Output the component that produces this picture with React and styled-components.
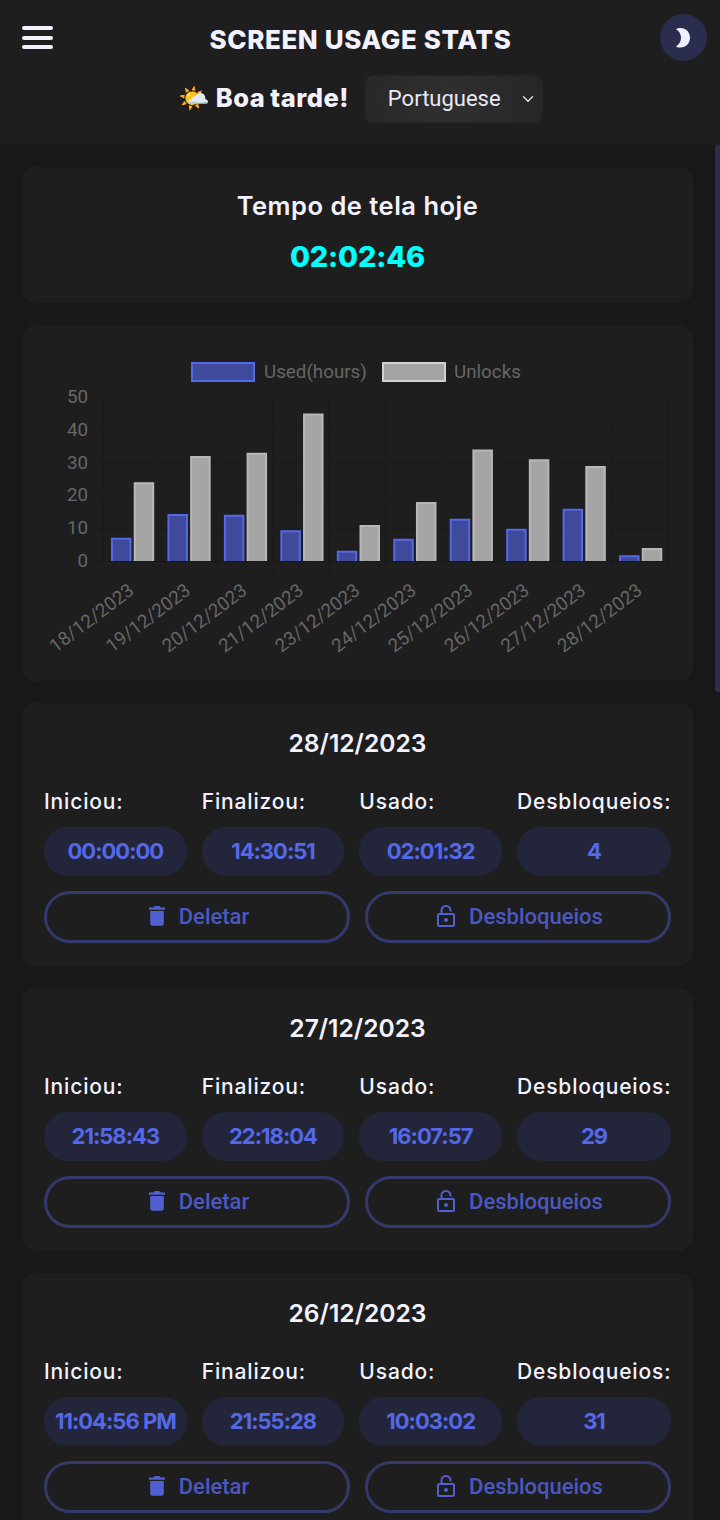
import React from "react";
import styled, { createGlobalStyle } from "styled-components";
import { ChevronDown } from "lucide-react";

const Global = createGlobalStyle`
  html, body { margin: 0; padding: 0; height: 100%; background: #181818; }
  #root { height: 1520px; }
  * { box-sizing: border-box; }
`;

const display = `"Inter", "Noto Sans", sans-serif`;
const ui = `"Roboto", "Noto Sans", sans-serif`;

const Page = styled.div`
  position: relative;
  width: 720px;
  height: 1520px;
  display: flex;
  flex-direction: column;
  overflow: hidden;
  background: #181818;
`;

const Header = styled.header`
  height: 145px;
  flex: none;
  background: #1e1e1e;
  padding: 14px 13px 0 22px;
  display: flex;
  flex-direction: column;
`;

const TopRow = styled.div`
  display: flex;
  align-items: center;
  justify-content: space-between;
  height: 47px;
`;

const Burger = styled.button`
  width: 31px;
  height: 23px;
  padding: 0;
  border: 0;
  background: none;
  display: flex;
  flex-direction: column;
  justify-content: space-between;
`;

const BurgerBar = styled.span`
  display: block;
  height: 4px;
  border-radius: 2px;
  background: #f3f2ff;
`;

const Title = styled.h1`
  margin: 0 0 0 8px;
  padding-top: 3px;
  font: 800 26px ${display};
  letter-spacing: 0.6px;
  color: #f3f2ff;
`;

const ThemeButton = styled.button`
  width: 47px;
  height: 47px;
  padding: 0;
  border: 0;
  border-radius: 50%;
  background: #2a2d4d;
  display: flex;
  align-items: center;
  justify-content: center;
`;

const GreetingRow = styled.div`
  display: flex;
  align-items: center;
  justify-content: center;
  gap: 16px;
  margin-top: 14px;
  padding-right: 8px;
`;

const Greeting = styled.span`
  display: flex;
  align-items: center;
  padding-bottom: 3px;
  font: 800 25.5px ${display};
  letter-spacing: 0.5px;
  word-spacing: -1px;
  color: #f3f2ff;
  white-space: pre;
`;

const SelectWrap = styled.div`
  position: relative;
  width: 178px;
  height: 48px;
  color: #e9e8f8;
  svg {
    position: absolute;
    right: 6px;
    top: 15px;
    pointer-events: none;
  }
`;

const LangSelect = styled.select`
  appearance: none;
  width: 100%;
  height: 100%;
  padding: 0 12px 2px 22px;
  border: 1px solid #252525;
  border-radius: 8px;
  background: radial-gradient(circle at 45% 50%, #303030, #262626);
  color: inherit;
  font: 400 22px ${ui};
  outline: none;
`;

const Main = styled.main`
  flex: 1;
  min-height: 0;
  overflow-y: auto;
  scrollbar-width: none;
  padding: 22px;
  display: flex;
  flex-direction: column;
  gap: 22px;
`;

const ScrollThumb = styled.div`
  position: absolute;
  top: 145px;
  right: 0;
  width: 5px;
  height: 547px;
  border-radius: 3px 0 0 3px;
  background: #2a2d4d;
`;

const Card = styled.section`
  flex: none;
  width: 671px;
  background: #1e1e1e;
  border-radius: 14px;
  padding: ${(p) => p.$padding || "22px 22px 23px"};
`;

const CardTitle = styled.h2`
  margin: 0;
  text-align: center;
  font: 600 ${(p) => p.$size}px/36px ${display};
  letter-spacing: ${(p) => p.$spacing || 0}px;
  color: #f3f2ff;
`;

const Clock = styled.div`
  margin-top: 11px;
  text-align: center;
  font: 800 29px/44px ${display};
  letter-spacing: -0.2px;
  color: #00ffff;
`;

const Chart = styled.svg`
  display: block;
  width: 671px;
  height: 356px;
`;

const Stats = styled.div`
  display: grid;
  grid-template-columns: repeat(3, 1fr) 154px;
  column-gap: 15px;
  margin-top: 26px;
`;

const StatLabel = styled.div`
  font: 500 21px/30px ${display};
  color: #f3f2ff;
  white-space: nowrap;
  letter-spacing: 0.85px;
`;

const StatValue = styled.div`
  margin-top: 10px;
  height: 49px;
  padding-bottom: 2px;
  border-radius: 24px;
  background: #23263a;
  color: #5468e8;
  display: flex;
  align-items: center;
  justify-content: center;
  font: 700 22px ${display};
  letter-spacing: -1px;
  white-space: nowrap;
`;

const Actions = styled.div`
  display: grid;
  grid-template-columns: 1fr 1fr;
  column-gap: 15px;
  margin-top: 15px;
`;

const ActionButton = styled.button`
  height: 52px;
  border: 3px solid #33396b;
  border-radius: 26px;
  background: none;
  color: #4a58c0;
  display: flex;
  align-items: center;
  justify-content: center;
  gap: 14px;
  font: 500 22px ${ui};
  padding: 0 0 2px 4px;
`;

const dayData = [
  { date: "28/12/2023", start: "00:00:00", end: "14:30:51", used: "02:01:32", unlocks: "4" },
  { date: "27/12/2023", start: "21:58:43", end: "22:18:04", used: "16:07:57", unlocks: "29" },
  { date: "26/12/2023", start: "11:04:56 PM", end: "21:55:28", used: "10:03:02", unlocks: "31" },
  { date: "25/12/2023", start: "22:12:10", end: "23:40:31", used: "13:02:44", unlocks: "34" },
  { date: "24/12/2023", start: "21:03:27", end: "22:58:12", used: "06:54:19", unlocks: "18" },
  { date: "23/12/2023", start: "20:45:09", end: "21:31:50", used: "03:09:41", unlocks: "11" },
  { date: "21/12/2023", start: "22:30:18", end: "23:15:02", used: "09:27:33", unlocks: "45" },
  { date: "20/12/2023", start: "21:11:36", end: "22:49:25", used: "14:08:16", unlocks: "33" },
  { date: "19/12/2023", start: "22:05:51", end: "23:22:47", used: "14:20:05", unlocks: "32" },
  { date: "18/12/2023", start: "20:37:14", end: "21:59:08", used: "07:06:28", unlocks: "24" },
];

const chartData = [
  ["18/12/2023", 7.1, 24],
  ["19/12/2023", 14.3, 32],
  ["20/12/2023", 14.1, 33],
  ["21/12/2023", 9.4, 45],
  ["23/12/2023", 3.1, 11],
  ["24/12/2023", 6.8, 18],
  ["25/12/2023", 12.9, 34],
  ["26/12/2023", 9.8, 31],
  ["27/12/2023", 15.9, 29],
  ["28/12/2023", 1.75, 4],
];

const BLUE = { fill: "#3f4a9a", stroke: "#5468e8" };
const GRAY = { fill: "#a5a5a5", stroke: "#b8b8b8" };

function UsageChart() {
  // svg origin is the card's top-left (22, 325)
  const x0 = 81.3;
  const step = 56.45;
  const base = 236;
  const unit = 3.28;
  const count = chartData.length;
  const right = x0 + step * count;
  const labelStyle = { font: "400 18.8px Roboto, sans-serif", fill: "#666" };
  const bar = (x, value, c) => (
    <path
      d={`M${x + 1} ${base}V${base - value * unit + 1}H${x + 19.5}V${base}`}
      fill={c.fill}
      stroke={c.stroke}
      strokeWidth="2"
    />
  );
  return (
    <Chart viewBox="0 0 671 356">
      <rect x="169" y="37" width="64" height="20" fill={BLUE.fill} />
      <rect x="170" y="38" width="62" height="18" fill="none" stroke={BLUE.stroke} strokeWidth="2" />
      <text x="242" y="53" style={labelStyle}>Used(hours)</text>
      <rect x="360" y="37" width="64" height="20" fill={GRAY.fill} />
      <rect x="361" y="38" width="62" height="18" fill="none" stroke="#d0d0d0" strokeWidth="2" />
      <text x="432" y="53" style={labelStyle}>Unlocks</text>

      {[0, 10, 20, 30, 40, 50].map((v) => {
        const y = base - v * unit;
        return (
          <g key={v}>
            <line x1={x0 - 10} x2={right} y1={y + 0.5} y2={y + 0.5} stroke={v === 0 ? "#171717" : "#1b1b1b"} strokeWidth="1" />
            <text x="66" y={y + 6} textAnchor="end" style={labelStyle}>{v}</text>
          </g>
        );
      })}
      {Array.from({ length: count + 1 }, (_, i) => (
        <line key={i} x1={x0 + i * step} x2={x0 + i * step} y1={base - 50 * unit} y2={base + 13} stroke="#1b1b1b" strokeWidth="1" />
      ))}
      {chartData.map(([label, used, unlocks], i) => {
        const x = x0 + i * step;
        return (
          <g key={label}>
            {bar(x + 7.7, used, BLUE)}
            {bar(x + 30.4, unlocks, GRAY)}
            <text
              transform={`translate(${x + 32} ${base + 32}) rotate(-37)`}
              textAnchor="end"
              style={labelStyle}
            >
              {label}
            </text>
          </g>
        );
      })}
    </Chart>
  );
}

const MoonIcon = () => (
  <svg width="16" height="20" viewBox="0 0 16 20">
    <path d="M1 1.2C2.2.4 3.8 0 5.500 0 11 0 15 4.400 15 9.800S11 19.600 5.500 19.600C3.800 19.600 2.200 19.200 1 18.400 4 16.600 6 13.500 6 9.800S4 2.900 1 1.200Z" fill="#f0efff" />
  </svg>
);

const TrashIcon = () => (
  <svg width="16" height="20" viewBox="0 0 16 20">
    <path d="M5.500 0h5l1 1.500H16v2.200H0V1.500h4.500z M1.200 5h13.600v12.500a2.300 2.300 0 0 1-2.300 2.300h-9a2.300 2.300 0 0 1-2.300-2.300z" fill="#5060d0" />
  </svg>
);

const LockIcon = () => (
  <svg width="18" height="22" viewBox="0 0 18 22" fill="none">
    <rect x="1" y="9" width="16" height="12" rx="1.200" stroke="#5060d0" strokeWidth="2" />
    <path d="M4.500 9V5.500a4.500 4.500 0 0 1 9 0V6.500" stroke="#5060d0" strokeWidth="2" />
    <circle cx="9" cy="15" r="2" fill="#5060d0" />
  </svg>
);

const DayCard = ({ day }) => (
  <Card>
    <CardTitle $size={24.6}>{day.date}</CardTitle>
    <Stats>
      <div>
        <StatLabel>Iniciou:</StatLabel>
        <StatValue>{day.start}</StatValue>
      </div>
      <div>
        <StatLabel>Finalizou:</StatLabel>
        <StatValue>{day.end}</StatValue>
      </div>
      <div>
        <StatLabel>Usado:</StatLabel>
        <StatValue>{day.used}</StatValue>
      </div>
      <div>
        <StatLabel>Desbloqueios:</StatLabel>
        <StatValue>{day.unlocks}</StatValue>
      </div>
    </Stats>
    <Actions>
      <ActionButton><TrashIcon />Deletar</ActionButton>
      <ActionButton><LockIcon />Desbloqueios</ActionButton>
    </Actions>
  </Card>
);

export default function App() {
  return (
    <Page>
      <Global />
      <Header>
        <TopRow>
          <Burger aria-label="Menu">
            <BurgerBar />
            <BurgerBar />
            <BurgerBar />
          </Burger>
          <Title>SCREEN USAGE STATS</Title>
          <ThemeButton aria-label="Tema"><MoonIcon /></ThemeButton>
        </TopRow>
        <GreetingRow>
          <Greeting>🌤️ Boa tarde!</Greeting>
          <SelectWrap>
            <LangSelect defaultValue="pt">
              <option value="en">English</option>
              <option value="pt">Portuguese</option>
            </LangSelect>
            <ChevronDown size={18} strokeWidth={1.6} />
          </SelectWrap>
        </GreetingRow>
      </Header>
      <Main>
        <Card $padding="21px 22px 24px">
          <CardTitle $size={25.5} $spacing={0.5}>Tempo de tela hoje</CardTitle>
          <Clock>02:02:46</Clock>
        </Card>
        <Card $padding="0">
          <UsageChart />
        </Card>
        {dayData.map((d) => <DayCard key={d.date} day={d} />)}
      </Main>
      <ScrollThumb />
    </Page>
  );
}
